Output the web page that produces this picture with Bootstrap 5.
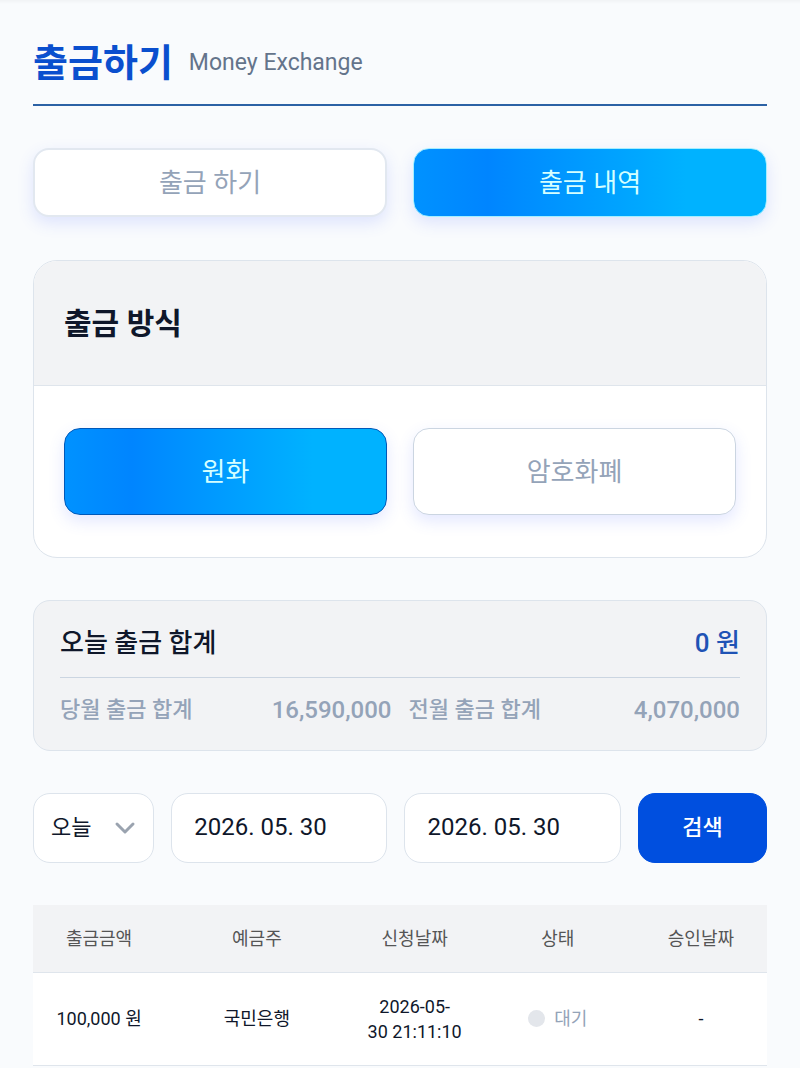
<!DOCTYPE html>
<html lang="ko">
<head>
<meta charset="utf-8">
<meta name="viewport" content="width=device-width, initial-scale=1">
<title>출금하기</title>
<link href="https://cdn.jsdelivr.net/npm/bootstrap@5.3.0/dist/css/bootstrap.min.css" rel="stylesheet">
<style>
  body { background: #f9fbfd linear-gradient(#f1f3f5, #f9fbfd) no-repeat top / 100% 4px; color: #0f172a; font-family: Roboto, "Noto Sans CJK KR", sans-serif; }
  .page { padding: 36px 33px 0; }
  .page-head { border-bottom: 2px solid #2c62a5; height: 70px; padding-bottom: 14px; margin-bottom: 42px; }
  .page-title { font-size: 38px; font-weight: 700; line-height: 52px; color: #0a4fce; }
  .page-sub { font-size: 23px; line-height: 52px; color: #64748b; }
  .choice { border: 1px solid #e2e8f0; border-radius: 16px; background: #fff; color: #94a3b8; font-size: 26px; line-height: 32px; box-shadow: 0 6px 16px rgba(65, 95, 255, .15); }
  .tabs { gap: 26px; margin-bottom: 43px; }
  .tabs .choice { height: 69px; border-width: 2px; }
  .methods { gap: 26px; padding: 42px 30px; }
  .methods .choice { height: 87px; border-color: #cbd5e1; }
  .choice.on { color: #d5ffff; background: linear-gradient(90deg, #0092ff, #0085ff 21%, #00b2ff 77%, #00b2ff) border-box; }
  .tabs .choice.on { border: 1px solid #a5efff; }
  .methods .choice.on { border: 1px solid #0058b8; }
  .panel { border: 1px solid #dde4ec; border-radius: 24px; overflow: hidden; background: #fff; margin-bottom: 42px; }
  .panel-head { background: #f2f3f5; border-bottom: 1px solid #dfe5ec; height: 125px; padding: 2px 30px 0; font-size: 30px; font-weight: 700; margin: 0; }
  .totals { background: #f2f3f5; border: 1px solid #dde4ec; border-radius: 17px; padding: 17px 26px 16px; margin-bottom: 42px; }
  .total-day { border-bottom: 1px solid #cbd5e1; height: 60px; font-size: 26px; font-weight: 500; padding-bottom: 8px; }
  .total-day .won { color: #1f53b5; }
  .total-month { gap: 17px; height: 56px; padding-top: 7px; color: #94a3b8; font-weight: 500; }
  .total-month dt { font-size: 22px; font-weight: 500; }
  .total-month dd { font-size: 24px; }
  .filters { display: grid; grid-template-columns: 121fr 216fr 216fr 129fr; gap: 17px; margin-bottom: 42px; }
  .filters .box { height: 70px; border: 1px solid #dde4ec; border-radius: 17px; background-color: #fff; color: #0f172a; font-size: 24px; padding: 0 22px 2px; min-width: 0; box-shadow: none; }
  .filters .period { font-size: 22px; padding: 0 17px 2px; background-size: 24px; background-position: right 16px center; background-image: url("data:image/svg+xml,%3Csvg xmlns='http://www.w3.org/2000/svg' viewBox='0 0 24 24'%3E%3Cpath d='M4 8l8 8 8-8' fill='none' stroke='%239aa3af' stroke-width='3' stroke-linecap='round' stroke-linejoin='round'/%3E%3C/svg%3E"); }
  .filters .go { background: #004fdf; border-color: #004fdf; color: #fff; font-size: 22px; font-weight: 500; }
  .history { table-layout: fixed; font-size: 18px; line-height: 25px; margin: 0; }
  .history th { background: #f2f3f5; color: #555; font-weight: 400; height: 67px; vertical-align: middle; }
  .history td { background: #fff; color: #0f172a; height: 93px; }
  .history th, .history td { border-bottom: 1px solid #dfe5ec; padding: 0 8px; }
  .col-18 { width: 18%; } .col-21 { width: 21%; } .col-25 { width: 25%; }
  .dot { width: 17px; height: 17px; background: #e3e6eb; }
  .waiting { color: #94a3b8; gap: 9px; }
</style>
</head>
<body>
<main class="page">
  <header class="page-head d-flex align-items-center">
    <h1 class="page-title mb-0 me-3">출금하기</h1>
    <span class="page-sub">Money Exchange</span>
  </header>

  <div class="tabs d-flex">
    <button type="button" class="choice flex-fill w-50">출금 하기</button>
    <button type="button" class="choice on flex-fill w-50">출금 내역</button>
  </div>

  <section class="panel">
    <h2 class="panel-head d-flex align-items-center">출금 방식</h2>
    <div class="methods d-flex">
      <button type="button" class="choice on flex-fill w-50">원화</button>
      <button type="button" class="choice flex-fill w-50">암호화폐</button>
    </div>
  </section>

  <section class="totals">
    <div class="total-day d-flex align-items-center justify-content-between">
      <span>오늘 출금 합계</span><span class="won">0 원</span>
    </div>
    <dl class="total-month d-flex mb-0">
      <div class="d-flex flex-fill w-50 align-items-center justify-content-between"><dt>당월 출금 합계</dt><dd class="mb-0">16,590,000</dd></div>
      <div class="d-flex flex-fill w-50 align-items-center justify-content-between"><dt>전월 출금 합계</dt><dd class="mb-0">4,070,000</dd></div>
    </dl>
  </section>

  <form class="filters">
    <select class="box period form-select" aria-label="기간"><option>오늘</option></select>
    <input class="box form-control" type="text" value="2026. 05. 30" aria-label="시작일">
    <input class="box form-control" type="text" value="2026. 05. 30" aria-label="종료일">
    <button type="button" class="box go">검색</button>
  </form>

  <table class="history table text-center align-middle">
    <thead>
      <tr><th class="col-18">출금금액</th><th class="col-25">예금주</th><th class="col-18">신청날짜</th><th class="col-21">상태</th><th class="col-18">승인날짜</th></tr>
    </thead>
    <tbody>
      <tr>
        <td>100,000 원</td>
        <td>국민은행</td>
        <td>2026-05-<br>30 21:11:10</td>
        <td><span class="waiting d-flex align-items-center justify-content-center"><i class="dot rounded-circle"></i>대기</span></td>
        <td>-</td>
      </tr>
    </tbody>
  </table>
</main>
<script src="https://cdn.jsdelivr.net/npm/bootstrap@5.3.0/dist/js/bootstrap.bundle.min.js"></script>
</body>
</html>
